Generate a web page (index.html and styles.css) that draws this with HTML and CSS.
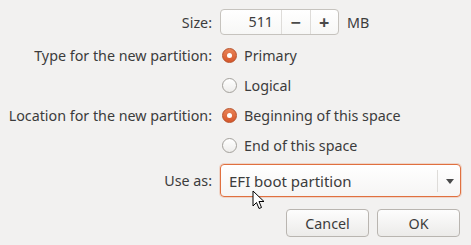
FILE: index.html
```html
<!DOCTYPE html>
<html lang="en">
<head>
    <title>Create partition</title>
    <link rel="stylesheet" href="styles.css">
</head>
<body>
    <div class="dialog">
        <div class="form">
            <label class="label">Size:</label>
            <div class="size-row">
                <div class="spin">
                    <span class="spin-value">511</span>
                    <span class="spin-btn">&minus;</span>
                    <span class="spin-btn">+</span>
                </div>
                <span class="unit">MB</span>
            </div>

            <label class="label row first-radio">Type for the new partition:</label>
            <div class="radio-row row first-radio"><span class="radio checked"></span>Primary</div>
            <span></span>
            <div class="radio-row row"><span class="radio"></span>Logical</div>

            <label class="label row">Location for the new partition:</label>
            <div class="radio-row row"><span class="radio checked"></span>Beginning of this space</div>
            <span></span>
            <div class="radio-row row"><span class="radio"></span>End of this space</div>

            <label class="label use-as">Use as:</label>
            <div class="use-as">
                <div class="combo">
                    <span class="combo-text">EFI boot partition</span>
                    <span class="combo-arrow"></span>
                </div>
            </div>
        </div>

        <div class="buttons">
            <button class="btn">Cancel</button>
            <button class="btn">OK</button>
        </div>
    </div>

    <svg class="cursor" width="13" height="21" viewBox="0 0 13 21">
        <path d="M1 1 L1 16 L4.5 12.5 L7 18.5 L9.5 17.5 L7 11.5 L12 11.5 Z" fill="#fff" stroke="#000" stroke-width="1" stroke-linejoin="round"/>
    </svg>
</body>
</html>
```

FILE: styles.css
```css
body {
    margin: 0;
    background-color: #f2f1f0;
    font-family: "Noto Sans", "DejaVu Sans", sans-serif;
    font-size: 14.3px;
    color: #3c3c3c;
}
.dialog {
    padding: 9px 10px 0 0;
}
.form {
    display: grid;
    grid-template-columns: 212px 1fr;
    column-gap: 8px;
}
.label {
    display: flex;
    align-items: center;
    justify-content: flex-end;
}
.row {
    height: 30px;
}
.first-radio {
    padding-top: 5px;
}
.use-as {
    padding-top: 4px;
    height: 33px;
}
.size-row {
    display: flex;
    align-items: center;
    gap: 8px;
    height: 26px;
}
.spin {
    display: flex;
    width: 117px;
    height: 24px;
    border: 1px solid #c6c3be;
    border-radius: 4px;
    background: linear-gradient(#ffffff, #f7f7f6);
}
.spin-value {
    width: 53px;
    padding-right: 8px;
    text-align: right;
    line-height: 24px;
    border-right: 1px solid #dedcd9;
}
.spin-btn {
    display: flex;
    align-items: center;
    justify-content: center;
    width: 28px;
    font-size: 18px;
    font-weight: bold;
    color: #4a4a4a;
}
.spin-btn + .spin-btn {
    border-left: 1px solid #dedcd9;
}
.radio-row {
    display: flex;
    align-items: center;
    gap: 7px;
    padding-left: 2px;
}
.radio {
    width: 13px;
    height: 13px;
    border: 1px solid #a3a09b;
    border-radius: 50%;
    background: linear-gradient(#ffffff, #eeedeb);
    position: relative;
}
.radio.checked {
    border-color: #b8512a;
    background: linear-gradient(#e98357, #d6572b);
}
.radio.checked::after {
    content: "";
    position: absolute;
    left: 4px;
    top: 4px;
    width: 5px;
    height: 5px;
    border-radius: 50%;
    background: #fff;
}
.combo {
    display: flex;
    align-items: center;
    height: 31px;
    border: 1px solid #e0703f;
    border-radius: 4px;
    background: linear-gradient(#ffffff, #f6f5f4);
    box-shadow: 0 0 0 1px rgba(233, 132, 84, 0.25);
}
.combo-text {
    flex: 1;
    padding-left: 8px;
    font-size: 15px;
}
.combo-arrow {
    width: 22px;
    height: 22px;
    border-left: 1px solid #dedcd9;
    position: relative;
}
.combo-arrow::after {
    content: "";
    position: absolute;
    left: 8px;
    top: 9px;
    border-left: 4px solid transparent;
    border-right: 4px solid transparent;
    border-top: 5px solid #4a4a4a;
}
.buttons {
    display: flex;
    justify-content: flex-end;
    gap: 8px;
    margin-top: 12px;
    padding-right: 1px;
}
.btn {
    width: 83px;
    height: 28px;
    border: 1px solid #b9b5b0;
    border-radius: 4px;
    background: linear-gradient(#fdfdfd, #ecebe9);
    font-family: inherit;
    font-size: 14.3px;
    color: #3c3c3c;
}
.cursor {
    position: absolute;
    left: 252px;
    top: 190px;
}
```
